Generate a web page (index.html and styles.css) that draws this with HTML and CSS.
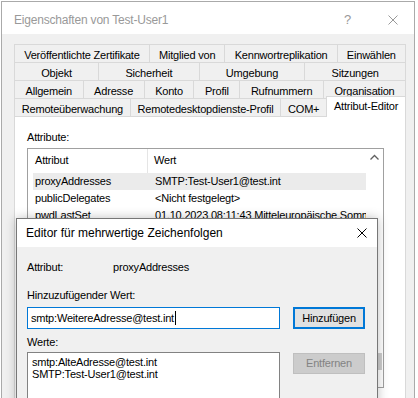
FILE: index.html
```html
<!DOCTYPE html>
<html lang="de">

<head>
    <meta charset="UTF-8">
    <title>Eigenschaften von Test-User1</title>
    <link rel="stylesheet" href="styles.css">
</head>

<body>
    <div class="window">
        <div class="titlebar">
            <span class="title">Eigenschaften von Test-User1</span>
            <span class="help">?</span>
            <svg class="close" width="10" height="10" viewBox="0 0 10 10">
                <path d="M0.5 0.5 L9.5 9.5 M9.5 0.5 L0.5 9.5" stroke="#999999" stroke-width="1" fill="none"/>
            </svg>
        </div>

        <div class="window-body">
            <div class="tabs">
                <div class="tab-row">
                    <div class="tab">Veröffentlichte Zertifikate</div>
                    <div class="tab">Mitglied von</div>
                    <div class="tab">Kennwortreplikation</div>
                    <div class="tab">Einwählen</div>
                </div>
                <div class="tab-row">
                    <div class="tab">Objekt</div>
                    <div class="tab">Sicherheit</div>
                    <div class="tab">Umgebung</div>
                    <div class="tab">Sitzungen</div>
                </div>
                <div class="tab-row">
                    <div class="tab">Allgemein</div>
                    <div class="tab">Adresse</div>
                    <div class="tab">Konto</div>
                    <div class="tab">Profil</div>
                    <div class="tab">Rufnummern</div>
                    <div class="tab">Organisation</div>
                </div>
                <div class="tab-row">
                    <div class="tab">Remoteüberwachung</div>
                    <div class="tab">Remotedesktopdienste-Profil</div>
                    <div class="tab">COM+</div>
                    <div class="tab tab-selected">Attribut-Editor</div>
                </div>
            </div>

            <div class="panel">
                <div class="label">Attribute:</div>
                <div class="attr-list">
                    <div class="attr-main">
                        <div class="attr-head">
                            <div class="head-name">Attribut</div>
                            <div class="head-value">Wert</div>
                        </div>
                        <div class="attr-row selected">
                            <div class="cell-name">proxyAddresses</div>
                            <div class="cell-value">SMTP:Test-User1@test.int</div>
                        </div>
                        <div class="attr-row">
                            <div class="cell-name">publicDelegates</div>
                            <div class="cell-value">&lt;Nicht festgelegt&gt;</div>
                        </div>
                        <div class="attr-row">
                            <div class="cell-name">pwdLastSet</div>
                            <div class="cell-value">01.10.2023 08:11:43 Mitteleuropäische Sommerzeit</div>
                        </div>
                    </div>
                    <div class="scrollbar">
                        <svg class="scroll-up" width="17" height="17" viewBox="0 0 17 17">
                            <path d="M4.5 10.5 L8.5 6.5 L12.5 10.5" stroke="#606060" stroke-width="1.3" fill="none"/>
                        </svg>
                        <div class="scroll-thumb"></div>
                    </div>
                </div>
            </div>
        </div>
    </div>

    <div class="dialog">
        <div class="dialog-titlebar">
            <span class="title">Editor für mehrwertige Zeichenfolgen</span>
            <svg class="close" width="10" height="10" viewBox="0 0 10 10">
                <path d="M0.5 0.5 L9.5 9.5 M9.5 0.5 L0.5 9.5" stroke="#000000" stroke-width="1" fill="none"/>
            </svg>
        </div>
        <div class="dialog-body">
            <div class="field">
                <div class="field-label">Attribut:</div>
                <div>proxyAddresses</div>
            </div>
            <div class="field field-gap">Hinzuzufügender Wert:</div>
            <div class="input-row">
                <div class="textbox">smtp:WeitereAdresse@test.int<span class="caret"></span></div>
                <div class="button button-default">Hinzufügen</div>
            </div>
            <div class="field values-label">Werte:</div>
            <div class="values-row">
                <div class="values">
                    <div>smtp:AlteAdresse@test.int</div>
                    <div>SMTP:Test-User1@test.int</div>
                </div>
                <div class="button button-disabled">Entfernen</div>
            </div>
        </div>
    </div>
</body>

</html>
```

FILE: styles.css
```css
html,
body {
    margin: 0;
    height: 100%;
    overflow: hidden;
}

body {
    font-family: "Liberation Sans", Arial, sans-serif;
    font-size: 11px;
    letter-spacing: -0.2px;
    color: #000000;
    background-color: #FFFFFF;
    position: relative;
}

.window {
    margin: 1px 0 0 1px;
    width: 414px;
    height: 420px;
    box-sizing: border-box;
    border: 1px solid #AAAAAA;
    border-bottom: none;
    background-color: #F0F0F0;
}

.titlebar {
    height: 32px;
    box-sizing: border-box;
    padding: 10px 16px 0 12px;
    background-color: #FFFFFF;
    display: flex;
    align-items: flex-start;
    font-size: 12px;
    line-height: 16px;
    color: #999999;
}

.titlebar .title {
    flex: 1;
}

.help {
    margin-right: 37px;
    font-size: 13px;
}

.titlebar .close {
    margin-top: 3px;
}

.window-body {
    padding: 10px 8px 0 12px;
}

.tab-row {
    display: flex;
    height: 18px;
}

.tab {
    flex: 1 1 auto;
    box-sizing: border-box;
    border-top: 1px solid #D9D9D9;
    border-left: 1px solid #D9D9D9;
    padding: 3px 4px 0;
    line-height: 14px;
    text-align: center;
    white-space: nowrap;
}

.tab:last-child {
    border-right: 1px solid #D9D9D9;
}

.tab-selected {
    position: relative;
    z-index: 1;
    margin-top: -2px;
    height: 21px;
    padding-top: 2px;
    background-color: #FFFFFF;
}

.panel {
    height: 300px;
    border: 1px solid #D9D9D9;
    background-color: #FFFFFF;
    padding: 13px 12px 0;
}

.label {
    line-height: 14px;
}

.attr-list {
    margin-top: 4px;
    width: 357px;
    height: 240px;
    box-sizing: border-box;
    border: 1px solid #A0A0A0;
    display: flex;
}

.attr-main {
    flex: 1;
    overflow: hidden;
}

.attr-head {
    display: flex;
    height: 24px;
    line-height: 22px;
}

.head-name {
    width: 120px;
    padding-left: 7px;
    box-sizing: border-box;
    border-right: 1px solid #E5E5E5;
}

.head-value {
    padding-left: 6px;
}

.attr-row {
    display: flex;
    height: 17px;
    line-height: 17px;
    margin-left: 5px;
}

.attr-row.selected {
    background-color: #EBEBEB;
}

.cell-name {
    width: 115px;
    padding-left: 2px;
    box-sizing: border-box;
}

.cell-value {
    flex: 1;
    padding-left: 7px;
    white-space: nowrap;
    overflow: hidden;
}

.scrollbar {
    width: 17px;
}

.scroll-up {
    display: block;
}

.scroll-thumb {
    margin: 187px 1px 0;
    height: 17px;
    background-color: #CDCDCD;
}

.dialog {
    position: absolute;
    left: 16px;
    top: 218px;
    width: 362px;
    height: 200px;
    box-sizing: border-box;
    border: 1px solid #777777;
    background-color: #F0F0F0;
    box-shadow: 0 0 10px rgba(0, 0, 0, 0.25);
}

.dialog-titlebar {
    height: 28px;
    padding: 0 10px 0 9px;
    background-color: #FFFFFF;
    display: flex;
    align-items: center;
    font-size: 12px;
    letter-spacing: 0;
}

.dialog-titlebar .title {
    flex: 1;
}

.dialog-body {
    padding: 13px 12px 0 10px;
}

.field {
    display: flex;
    line-height: 14px;
}

.field-label {
    width: 86px;
}

.field-gap {
    margin-top: 14px;
}

.input-row {
    display: flex;
    gap: 13px;
    margin-top: 5px;
}

.textbox {
    width: 253px;
    height: 22px;
    box-sizing: border-box;
    border: 1px solid #0078D7;
    background-color: #FFFFFF;
    padding-left: 3px;
    display: flex;
    align-items: center;
}

.caret {
    display: inline-block;
    width: 1px;
    height: 14px;
    margin-left: 1px;
    background-color: #000000;
}

.button {
    width: 72px;
    height: 22px;
    box-sizing: border-box;
    border: 1px solid #ADADAD;
    background-color: #E1E1E1;
    text-align: center;
    line-height: 20px;
}

.button-default {
    border: 2px solid #0078D7;
    line-height: 18px;
}

.button-disabled {
    margin-top: 1px;
    height: 21px;
    line-height: 19px;
    border-color: #BFBFBF;
    background-color: #CCCCCC;
    color: #838383;
}

.values-label {
    margin-top: 6px;
}

.values-row {
    display: flex;
    align-items: flex-start;
    gap: 13px;
    margin-top: 3px;
}

.values {
    width: 253px;
    height: 80px;
    box-sizing: border-box;
    border: 1px solid #828282;
    background-color: #FFFFFF;
    padding: 3px 4px 0;
    line-height: 12px;
}
```
